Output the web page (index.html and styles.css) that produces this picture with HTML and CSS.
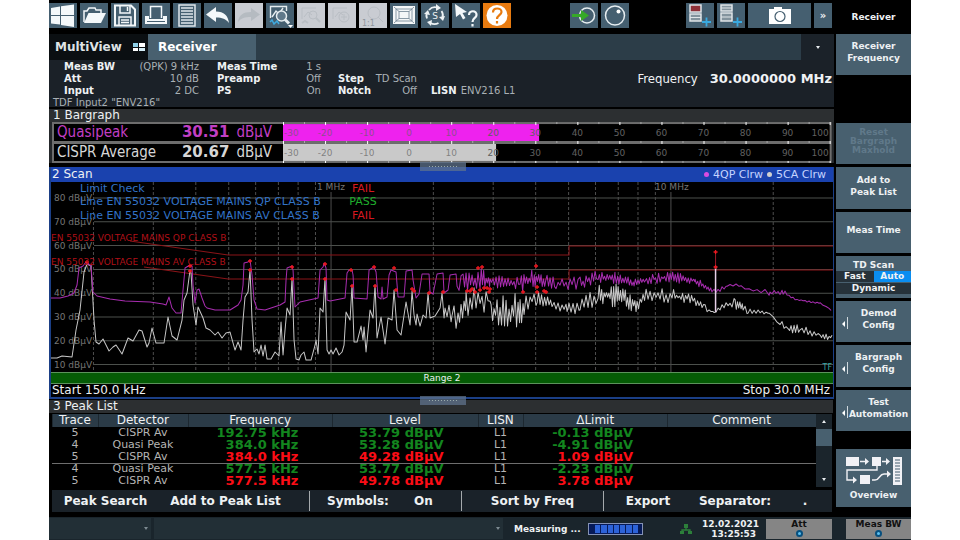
FILE: index.html
```html
<!DOCTYPE html>
<html lang="en">
<head>
<meta charset="utf-8">
<title>Receiver</title>
<link rel="stylesheet" href="styles.css">
</head>
<body>
<div class="screen">
  <div class="main">
    <div class="work">
      <div class="toolbar">
        <button class="tool" aria-label="Windows"><svg viewBox="0 0 28 25"><path fill="#f4f8fa" d="M2 5l9-1.500v8.500H2zM12 3.300L25 1.500V12H12zM2 13h9v8.500L2 20.500zM12 13h13v11l-13-2z"/></svg></button>
        <button class="tool" aria-label="Open"><svg viewBox="0 0 28 25"><path fill="none" stroke="#f4f8fa" stroke-width="1.500" d="M4 19V8h3l2-3h6l1 2h5v3"/><path fill="#f4f8fa" d="M8.500 10H26l-5 10H4z"/></svg></button>
        <button class="tool" aria-label="Save"><svg viewBox="0 0 28 25"><path fill="none" stroke="#f4f8fa" stroke-width="2" d="M4 2.500h16l4 4V22.500H4z"/><path fill="none" stroke="#f4f8fa" stroke-width="1.500" d="M9 3v7h10V3M8 22v-8h12v8M16.500 4v4M10 17h8M10 19.500h8"/></svg></button>
        <button class="tool" aria-label="Print"><svg viewBox="0 0 28 25"><path fill="none" stroke="#f4f8fa" stroke-width="1.500" d="M8.500 15V3.500h11V15"/><path fill="#f4f8fa" d="M3 13h4v3h14v-3h4v8H3z"/><path stroke="#455f70" d="M5 18.500h18"/></svg></button>
        <button class="tool" aria-label="Report"><svg viewBox="0 0 28 25"><path fill="none" stroke="#dfe7eb" stroke-width="1.500" d="M6 2h16v21H6zM8 5h12M8 8h12M8 11h12M8 14h12M8 17h12M8 20h12"/></svg></button>
        <button class="tool" aria-label="Undo"><svg viewBox="0 0 28 25"><path fill="#f4f8fa" d="M2 11.500L12 4v4.500c8 0 12 4 13 11.500-3-4-7-5.500-13-5.500V19z"/></svg></button>
        <button class="tool off" disabled aria-label="Redo"><svg viewBox="0 0 28 25"><path fill="#b5bbc1" d="M25 11.500L16 5v4C8 9 4 12 3 19c3-4 7-5 13-5v4z"/></svg></button>
        <button class="tool" aria-label="Zoom trace"><svg viewBox="0 0 28 25"><path fill="none" stroke="#e6edf0" stroke-width="1.400" d="M4.500 15V3.500h16V8M6 14l4-6 3 3 4-6"/><circle cx="15.500" cy="13" r="5" fill="#60798a" stroke="#e6edf0" stroke-width="1.500"/><path stroke="#e6edf0" stroke-width="3" d="M19 16.500l4 4"/><path fill="none" stroke="#3fa9df" stroke-width="1.500" d="M4 19l2-2 2 4 3-3 2 3"/><path fill="#fff" d="M22 22h5l-2.500 3z"/></svg></button>
        <button class="tool off" disabled aria-label="Zoom off"><svg viewBox="0 0 28 25" fill="none" stroke="#b9bec4"><path d="M5 16V5h14M7 14l4-5 4 3"/><circle cx="16" cy="12" r="4"/><path stroke-width="2" d="M19 15l4 4M5 20l3-2 3 2"/></svg></button>
        <button class="tool off" disabled aria-label="Multi zoom"><svg viewBox="0 0 28 25" fill="none" stroke="#b9bec4"><path d="M5 16V5h14M7 14l4-5 4 3M13 14h6M16 11v6"/><circle cx="16" cy="14" r="5"/></svg></button>
        <button class="tool off" disabled aria-label="Zoom 1:1"><svg viewBox="0 0 28 25" fill="none" stroke="#b9bec4"><circle cx="15" cy="10" r="6"/><path d="M19 14l5 5"/><text x="3" y="23" fill="#8f969d" stroke="none" font-size="8">1:1</text></svg></button>
        <button class="tool" aria-label="Fit display"><svg viewBox="0 0 28 25"><path fill="#f4f7f8" d="M3 3h22v18H3z"/><path fill="none" stroke="#6d8290" stroke-width="0.800" d="M6 6h16v12H6zM9 8.500h10v7H9zM4 4l5 4.500M24 4l-5 4.500M4 20l5-4.500M24 20l-5-4.500"/></svg></button>
        <button class="tool" aria-label="Sequencer"><svg viewBox="0 0 28 25"><path fill="none" stroke="#edf2f4" stroke-width="1.800" d="M8 7a8 8 0 0 1 8-2.500M20.500 8a8 8 0 0 1 1 7M17.500 20a8 8 0 0 1-8 0M6 15.500a8 8 0 0 1 0-6"/><path fill="#edf2f4" d="M15 1l5 4-5 3zM24 13l-2 5-4-4zM11 17l-1 6-4-4zM3 11l4-4 2 5z"/><text x="14" y="16" text-anchor="middle" font-size="9" fill="#edf2f4">S</text></svg></button>
        <button class="tool" aria-label="Context help"><svg viewBox="0 0 28 25"><path fill="#f4f8fa" d="M3 1l12 8-4.500 1 3 5-2.500 1.500-3-5.500L4 14z"/><path fill="none" stroke="#f4f8fa" stroke-width="2.200" d="M17 12c0-5 8-5 7.500 0 0 3-4 3-4 7M20.500 21v2.500"/></svg></button>
        <button class="tool help" aria-label="Help"><svg viewBox="0 0 28 25"><circle cx="14" cy="12.500" r="10.500" fill="#fff"/><path fill="none" stroke="#e87b10" stroke-width="2.200" d="M10 9.500c0-5.500 8.500-5 8.500-.5 0 3-4.500 3.500-4.500 7M14 18v2.500"/></svg></button>
        <span class="space-a"></span>
        <button class="tool" aria-label="Single run"><svg viewBox="0 0 28 25"><circle cx="17" cy="12.500" r="7.500" fill="none" stroke="#e6edf0" stroke-width="1.500"/><path fill="#36a928" d="M2 11h9V7l8 5.500-8 5.500v-4H2z"/></svg></button>
        <button class="tool" aria-label="Continuous run"><svg viewBox="0 0 28 25"><circle cx="14" cy="12.500" r="9.500" fill="none" stroke="#e6edf0" stroke-width="1.500"/><circle cx="17.500" cy="8.500" r="2" fill="#fff"/></svg></button>
        <span class="space-b"></span>
        <button class="tool" aria-label="Add limit line"><svg viewBox="0 0 28 25"><path fill="#8e3038" stroke="#dfe5e8" stroke-width="1.500" d="M4 2h11v7H4z"/><path fill="#83939d" stroke="#dfe5e8" stroke-width="1.500" d="M4 11h11v7H4z"/><path stroke="#dfe5e8" d="M4 14.500h11"/><path stroke="#39a9e0" stroke-width="1.800" d="M16 19h9M20.500 14.500v9"/></svg></button>
        <button class="tool" aria-label="Add window"><svg viewBox="0 0 28 25"><path fill="#83939d" stroke="#dfe5e8" stroke-width="1.500" d="M4 2h11v6H4zM4 10h11v8H4z"/><path stroke="#dfe5e8" d="M4 5h11M4 14h11"/><path stroke="#39a9e0" stroke-width="1.800" d="M16 19h9M20.500 14.500v9"/></svg></button>
        <button class="tool camera" aria-label="Screenshot"><svg viewBox="0 0 28 25"><path fill="#fff" d="M3 6h5V4h8v2h9v15H3z"/><circle cx="14" cy="13.500" r="5" fill="#fff" stroke="#455f70" stroke-width="1.200"/></svg></button>
        <button class="tool more">»</button>
      </div>

      <div class="tabs">
        <button class="tab">MultiView <svg class="quad" viewBox="0 0 12 8"><path fill="#8ed0e8" d="M0 0h5v4H0z"/><path fill="#fff" d="M6 0h6v4H6zM0 5h5v3H0z"/><path fill="#d5eef7" d="M6 5h6v3H6z"/></svg></button>
        <button class="tab current">Receiver</button>
        <span class="tab-fill"></span>
        <button class="tab-menu" aria-label="Tab menu"><i class="caret"></i></button>
      </div>

      <div class="info">
        <dl class="params p1"><dt>Meas BW</dt><dd>(QPK) 9 kHz</dd><dt>Att</dt><dd>10 dB</dd><dt>Input</dt><dd>2 DC</dd></dl>
        <dl class="params p2"><dt>Meas Time</dt><dd>1 s</dd><dt>Preamp</dt><dd>Off</dd><dt>PS</dt><dd>On</dd></dl>
        <dl class="params p3"><dt>Step</dt><dd>TD Scan</dd><dt>Notch</dt><dd>Off</dd></dl>
        <dl class="params p4"><dt>LISN</dt><dd>ENV216 L1</dd></dl>
        <div class="freq"><span>Frequency</span> <b>30.0000000 MHz</b></div>
        <div class="tdf">TDF Input2 "ENV216"</div>
      </div>

      <section class="bargraph">
        <h2 class="bar-title">1 Bargraph</h2>
        <div class="meters">
          <div class="readings">
            <div class="reading qp"><span>Quasipeak</span><b>30.51</b><span>dBµV</span></div>
            <div class="reading"><span>CISPR Average</span><b>20.67</b><span>dBµV</span></div>
          </div>
          <svg class="scale" id="scale" viewBox="0 0 550 41"></svg>
        </div>
        <i class="grip"></i>
      </section>

      <section class="scan">
        <div class="scan-head"><h2>2 Scan</h2><span class="legend"><i class="dot m"></i>4QP Clrw <i class="dot"></i>5CA Clrw</span></div>
        <svg class="plot" id="plot" viewBox="51 182 782 190"></svg>
        <div class="range">Range 2</div>
        <div class="span-row"><span>Start 150.0 kHz</span><span>Stop 30.0 MHz</span></div>
        <i class="grip"></i>
      </section>

      <section class="peaks">
        <h2 class="peak-title">3 Peak List</h2>
        <div class="table-wrap">
          <table>
            <colgroup><col class="c1"><col class="c2"><col class="c3"><col class="c4"><col class="c5"><col class="c6"><col class="c7"></colgroup>
            <thead><tr><th>Trace</th><th>Detector</th><th>Frequency</th><th>Level</th><th>LISN</th><th>ΔLimit</th><th>Comment</th></tr></thead>
            <tbody>
              <tr class="ok"><td>5</td><td>CISPR Av</td><td class="v">192.75 kHz</td><td class="v">53.79 dBµV</td><td>L1</td><td class="v">-0.13 dBµV</td><td></td></tr>
              <tr class="ok"><td>4</td><td>Quasi Peak</td><td class="v">384.0 kHz</td><td class="v">53.28 dBµV</td><td>L1</td><td class="v">-4.91 dBµV</td><td></td></tr>
              <tr class="bad line"><td>5</td><td>CISPR Av</td><td class="v">384.0 kHz</td><td class="v">49.28 dBµV</td><td>L1</td><td class="v">1.09 dBµV</td><td></td></tr>
              <tr class="ok"><td>4</td><td>Quasi Peak</td><td class="v">577.5 kHz</td><td class="v">53.77 dBµV</td><td>L1</td><td class="v">-2.23 dBµV</td><td></td></tr>
              <tr class="bad"><td>5</td><td>CISPR Av</td><td class="v">577.5 kHz</td><td class="v">49.78 dBµV</td><td>L1</td><td class="v">3.78 dBµV</td><td></td></tr>
            </tbody>
          </table>
          <div class="scroll"><button aria-label="Scroll up"><i class="caret up"></i></button><i class="thumb"></i><button aria-label="Scroll down"><i class="caret"></i></button></div>
        </div>
        <div class="actions">
          <button class="a1">Peak Search</button><button class="a2">Add to Peak List</button>
          <button class="a3">Symbols:</button><button class="a4">On</button>
          <button class="a5">Sort by Freq</button>
          <button class="a6">Export</button><button class="a7">Separator:</button><button class="a8">.</button>
        </div>
      </section>
    </div>

    <aside class="side">
      <h1>Receiver</h1>
      <div class="keys">
        <button class="key">Receiver<br>Frequency</button>
        <span></span>
        <button class="key dim" disabled>Reset<br>Bargraph<br>Maxhold</button>
        <button class="key">Add to<br>Peak List</button>
        <button class="key mid">Meas Time</button>
        <button class="key toggle"><span>TD Scan</span><span class="pair"><span>Fast</span><span class="on">Auto</span></span><span class="dyn">Dynamic</span></button>
        <button class="key sub">Demod<br>Config</button>
        <button class="key sub">Bargraph<br>Config</button>
        <button class="key sub">Test<br>Automation</button>
      </div>
      <button class="key overview"><svg viewBox="0 0 58 30"><path fill="#f1f1f5" d="M1 1h13v9H1zM27 1h9v9h-9zM15 19h10v9H15zM48 1h9v28h-9z"/><path stroke="#455f70" d="M50 4h5M50 7h5M50 10h5M50 13h5M50 16h5M50 19h5M50 22h5M50 25h5"/><path fill="none" stroke="#f1f1f5" stroke-width="1.400" d="M15 5.500h6M37 5.500h5M32 10v4H2v10h6M27 24h3c5 0 4-6 9-6h4"/><path fill="#f1f1f5" d="M20 2l4 3.500L20 9zM41 2l4 3.500L41 9zM8 20.500l4 3.500-4 3.500zM42 14.500l4 3.500-4 3.500z"/></svg>Overview</button>
    </aside>
  </div>

  <footer class="status">
    <div class="msg m1"><i class="caret"></i></div>
    <div class="msg m2"><i class="caret"></i></div>
    <span class="measuring">Measuring ...</span>
    <span class="progress"><i></i><i></i><i></i><i></i><i></i><i></i><i></i></span>
    <svg class="net" viewBox="0 0 14 12"><path fill="none" stroke="#2c7f3a" stroke-width="1.300" d="M7 4v3M3 9V7h8v2"/><path fill="#2c7f3a" d="M5 1h4v4H5zM1 8h4v3H1zM9 8h4v3H9z"/></svg>
    <time>12.02.2021<br>13:25:53</time>
    <button class="knob k1">Att<i></i></button>
    <button class="knob k2">Meas BW<i></i></button>
  </footer>
</div>
<script src="chart.js"></script>
</body>
</html>
```
FILE: styles.css
```css
* { box-sizing: border-box; }
body { margin: 0; background: #fff; font-family: "DejaVu Sans", Verdana, sans-serif; }
button { border: 0; padding: 0; margin: 0; font: inherit; color: inherit; background: none; }
h1, h2, dl, dd { margin: 0; font: inherit; }
svg { display: block; }

.screen { margin: 0 5.100vw; background: #000; color: #eef1f3; min-height: 100vh; display: flex; flex-direction: column; }
.main { display: flex; flex: 1; gap: 2px; }
.work { flex: 1; min-width: 0; }

.toolbar { display: flex; gap: 3px; padding: 3px 2px 0 0; height: 34px; }
.tool { width: 28px; height: 25px; background: #455f70; flex: none; }
.tool svg { width: 28px; height: 25px; }
.tool.off { background: #c9ccd2; }
.tool.help { background: #e87b10; }
.tool.camera { width: 63px; }
.tool.camera svg { margin: 0 auto; }
.tool.more { width: 18px; font-size: 10px; font-weight: bold; }
.space-a { flex: 56; }
.space-b { flex: 54; }

.tabs { display: flex; height: 26px; font-size: 12px; font-weight: bold; }
.tab { display: flex; align-items: center; gap: 11px; width: 99px; padding-left: 6px; color: #dfe3e5; background: #0b0f12; }
.tab.current { width: 108px; padding-left: 10px; background: #48606f; color: #fff; }
.quad { width: 12px; height: 8px; }
.tab-fill { flex: 1; background: #2c3d48; }
.tab-menu { width: 33px; background: #1b2229; display: grid; place-items: center; }
.caret { display: block; width: 0; height: 0; border: 2px solid transparent; border-top: 3px solid #e8ecee; border-bottom: 0; }
.caret.up { border-top: 0; border-bottom: 3px solid #e8ecee; }

.info { display: grid; grid-template-columns: 15px 135px 18px 104px 17px 79px 14px 1fr auto; grid-template-rows: 37px 10px; height: 47px; background: #1b2128; font-size: 10px; line-height: 12px; color: #a9b0b5; }
.params { display: grid; grid-template-columns: auto 1fr; align-content: start; row-gap: 0; align-self: end; }
.params dt { font-weight: bold; color: #eef1f3; }
.params dd { text-align: right; white-space: nowrap; }
.p1 { grid-column: 2; } .p2 { grid-column: 4; } .p3 { grid-column: 6; } .p4 { grid-column: 8; }
.p4 dd { text-align: left; padding-left: 4px; }
.freq { grid-column: 9; align-self: center; display: flex; align-items: baseline; gap: 12px; padding-right: 2px; color: #f0f3f5; font: 13px "DejaVu Sans Condensed", "DejaVu Sans", sans-serif; }
.freq b { font-family: "DejaVu Sans", sans-serif; }
.tdf { grid-column: 1 / -1; padding-left: 4px; }

.bargraph { margin-top: 2px; background: #25282b; position: relative; }
.bar-title, .peak-title { padding-left: 4px; height: 13px; font-size: 12px; line-height: 13px; background: #2c2f31; }
.meters { display: flex; margin: 0 2px 0 3px; }
.readings { flex: 230; min-width: 0; background: #6d6d6d; padding: 2px 0 2px 2px; display: grid; grid-template-rows: 1fr 1fr; gap: 3px; }
.reading { display: grid; grid-template-columns: 1fr auto 45px; align-items: center; padding: 0 9px 0 3px; background: #000; color: #d6d6d6; font: 15px/17px "DejaVu Sans Condensed", "DejaVu Sans", sans-serif; white-space: nowrap; }
.reading b { font-family: "DejaVu Sans", sans-serif; }
.reading span:last-child { padding-left: 7px; }
.reading.qp { color: #c23fc4; }
.scale { flex: 550; min-width: 0; }
.scale text, .plot text { font-family: "DejaVu Sans", sans-serif; }
.scale text { font-size: 9px; fill: #606060; }
.grip { position: absolute; z-index: 2; left: 47.200%; width: 46px; height: 9px; bottom: -8px; background: repeating-linear-gradient(90deg, #9aa 0 1px, transparent 1px 3px) 50% 4px / 28px 1px no-repeat, rgba(95, 115, 140, 0.750); }

.scan { margin-top: 4px; border: solid #1b3f86; border-width: 0 1px 2px 2px; position: relative; }
.scan-head { display: flex; justify-content: space-between; height: 15px; padding: 0 7px 0 1px; background: #1a42ae; font-size: 12px; line-height: 15px; }
.legend { display: flex; align-items: center; gap: 4px; font-size: 11px; color: #c5d4ff; }
.dot { width: 5px; height: 5px; border-radius: 50%; background: #d0d0d0; }
.dot.m { background: #d94be0; }
.plot { width: 100%; height: auto; }
.range { height: 12px; border: 1px solid #5c925c; border-width: 1px 0; background: #055b05; font-size: 9px; line-height: 10px; text-align: center; }
.span-row { display: flex; justify-content: space-between; padding: 0 3px 0 1px; font-size: 12px; line-height: 13px; height: 13px; }

.peaks { margin-top: 1px; }
.peak-title { margin: 0 1px 1px 0; }
.table-wrap { display: flex; margin: 0 2px 0 3px; height: 73px; }
table { flex: 1; border-collapse: collapse; table-layout: fixed; width: 100%; }
.c1 { width: 6%; } .c2 { width: 11.800%; } .c3 { width: 18.900%; } .c4 { width: 19%; } .c5 { width: 6%; } .c6 { width: 18.800%; }
th { padding: 0; font-size: 12px; font-weight: normal; line-height: 13px; background: linear-gradient(90deg, #1d2830 0 1px, #2b3b47 1px); }
td { padding: 0; text-align: center; font-size: 11px; line-height: 12px; height: 12px; color: #b4b4b4; white-space: nowrap; }
td.v { text-align: right; padding-right: 34px; font-size: 13px; font-weight: bold; }
.ok td.v { color: #13861f; }
.bad td.v { color: #fb0d16; }
.line td { box-shadow: 0 1px #6e6e6e; }
.scroll { width: 16px; background: #1b252c; display: flex; flex-direction: column; }
.scroll button { height: 15px; display: grid; place-items: center; }
.scroll button:last-child { margin-top: auto; }
.thumb { height: 17px; background: #48606f; }
.actions { display: grid; grid-template-columns: 107fr 150fr 97fr 55fr 142fr 89fr 86fr 54fr; align-items: center; height: 22px; margin: 3px 2px 5px 3px; background: #1a2229; font-size: 12px; font-weight: bold; }
.actions button { height: 20px; white-space: nowrap; }
.a3, .a5, .a6 { border-left: 1px solid #a5aaad; }
.a2 { padding-right: 17px; }
.a4 { padding-right: 20px; }

.side { width: 75px; display: flex; flex-direction: column; font-size: 9px; font-weight: bold; text-align: center; line-height: 12px; }
.side h1 { height: 34px; padding-top: 11px; }
.keys { flex: 1; display: grid; grid-template-rows: repeat(9, 1fr); gap: 3px; max-height: 397px; }
.key { background: #48606f; position: relative; display: block; }
.key:first-child, .key:nth-child(4), .key:nth-child(n+7) { padding-bottom: 5px; }
.key.mid { padding-bottom: 4px; }
.key.dim { color: #60798a; line-height: 9px; padding-bottom: 5px; }
.key.toggle { display: flex; flex-direction: column; justify-content: space-between; line-height: 11px; padding-top: 4px; }
.pair { display: grid; grid-template-columns: 1fr 1fr; background: #26323a; }
.on { background: #0a8df0; }
.dyn { background: #26323a; margin-bottom: 4px; }
.key.sub { padding-left: 10px; }
.key.sub::before { content: ""; position: absolute; left: 6px; top: 50%; border: 3px solid transparent; border-right-color: #fff; border-left: 0; }
.key.sub::after { content: ""; position: absolute; left: 11px; top: 40%; height: 12px; width: 1px; background: #cfd8dd; }
.key.overview { height: 58px; margin: 18px 0 8px; display: flex; flex-direction: column; align-items: center; justify-content: flex-end; gap: 3px; padding-bottom: 6px; }
.overview svg { width: 58px; height: 30px; }

.status { display: flex; align-items: center; height: 23px; background: #1a252c; font-size: 9px; font-weight: bold; line-height: 10px; }
.msg { height: 21px; background: #222f36; display: flex; justify-content: flex-end; align-items: center; padding-right: 3px; margin-right: 3px; }
.msg .caret { border-top-color: #7d8a91; }
.m1 { width: 102px; }
.m2 { flex: 1; margin-right: 11px; }
.measuring { width: 74px; white-space: nowrap; }
.progress { display: flex; gap: 1px; width: 55px; height: 12px; border: 1px solid #8492b5; background: #061a58; padding: 1px 4px 1px 6px; }
.progress i { flex: 1; background: #2d63d8; }
.net { width: 14px; height: 12px; margin: 0 9px 0 36px; }
time { width: 54px; display: flow-root; text-align: right; white-space: nowrap; }
.knob { width: 66px; height: 20px; margin-left: 10px; background: #858585; color: #111; line-height: 10px; display: flex; flex-direction: column; align-items: center; }
.knob i { width: 7px; height: 7px; border: 2px solid #07507f; border-radius: 50%; background: #5cc0f0; margin-top: 1px; }
.k2 { margin-left: 14px; width: 65px; }
```
FILE: chart.js
```js
var NS = "http://www.w3.org/2000/svg";

function add(parent, name, attrs, text) {
  var el = document.createElementNS(NS, name);
  for (var k in attrs) el.setAttribute(k, attrs[k]);
  if (text) el.textContent = text;
  parent.appendChild(el);
  return el;
}

// Repeatable noise so the traces look the same on each load.
var seed = 7;
function rnd() {
  seed = (seed * 16807) % 2147483647;
  return seed / 2147483647;
}

// ---- bargraph scale: -30 to 100 dBµV ----
var scale = document.getElementById("scale");
add(scale, "rect", { width: 550, height: 41, fill: "#6d6d6d" });
function px(v) { return (v + 30) * 548 / 130; }
[[2, 30.9, "#ee22ee"], [22, 20.67, "#c9c9c9"]].forEach(function (b) {
  add(scale, "rect", { x: 0, y: b[0], width: 548, height: 17, fill: "#000" });
  add(scale, "rect", { x: 0, y: b[0], width: px(b[1]), height: 17, fill: b[2] });
});
for (var v = -30; v <= 100; v += 5) {
  [0, 19, 39].forEach(function (y) {
    add(scale, "rect", { x: px(v), y: y, width: 1, height: v % 10 ? 2 : 3, fill: v % 10 ? "#aaa" : "#fff" });
  });
  if (v % 10 === 0) {
    [14, 34].forEach(function (y) {
      var first = v === -30, last = v === 100;
      add(scale, "text", {
        x: first ? 1 : last ? 547 : px(v), y: y,
        "text-anchor": first ? "start" : last ? "end" : "middle",
        "fill-opacity": v < 20 ? 0.7 : 1
      }, String(v));
    });
  }
}

// ---- scan plot ----
var plot = document.getElementById("plot");
function fx(khz) { return 51 + 782 * Math.log(khz / 150) / Math.log(200); }
function dy(db) { return 198 + (80 - db) * 2.38; }

for (var db = 80; db >= 10; db -= 10) {
  add(plot, "line", { x1: 94, x2: 833, y1: dy(db), y2: dy(db), stroke: "#4c504c", "stroke-width": 1 });
}
[100, 1000, 10000].forEach(function (dec) {
  for (var n = 1; n < 10; n++) {
    var f = dec * n;
    if (f < 200 || f >= 30000) continue;
    add(plot, "line", {
      x1: fx(f), x2: fx(f), y1: n === 1 ? 192 : 182, y2: 372, stroke: "#4d4d4d",
      "stroke-dasharray": n === 1 ? "none" : "3 2"
    });
  }
});
for (db = 80; db >= 10; db -= 10) {
  add(plot, "text", { x: 54, y: dy(db) + 3, "font-size": 9, fill: "#767676" }, db + " dBµV");
}
add(plot, "text", { x: 317, y: 190, "font-size": 9, fill: "#767676" }, "1 MHz");
add(plot, "text", { x: 655, y: 190, "font-size": 9, fill: "#767676" }, "10 MHz");

add(plot, "polyline", { points: "130,241 228,255 569,255 569,246 833,246", fill: "none", stroke: "#8a1418" });
add(plot, "polyline", { points: "144,267 228,279 569,279 569,270 833,270", fill: "none", stroke: "#8a1418" });

function trace(shape, noise, color) {
  var pts = shape.slice();
  for (var i = 0; i < noise.length - 1; i++) {
    var a = noise[i], b = noise[i + 1];
    for (var x = a[0]; x < b[0]; x += a[3]) {
      var t = (x - a[0]) / (b[0] - a[0]);
      var top = a[1] + (b[1] - a[1]) * t, bot = a[2] + (b[2] - a[2]) * t;
      var up = Math.round(x / a[3]) % 2;
      var r = up ? rnd() * 0.45 : 1 - rnd() * 0.45;
      pts.push([x.toFixed(1), (top + (bot - top) * r).toFixed(1)]);
    }
  }
  add(plot, "polyline", { points: pts.join(" "), fill: "none", stroke: color, "stroke-width": 1, "stroke-linejoin": "round" });
}

trace([[51,358],[57,358],[62,356],[72,357],[76,330],[80,310],[84,272],[87,264],[91,266],[94,320],[96,342],[99,344],[103,339],[109,351],[113,347],[116,345],[122,354],[128,338],[133,341],[139,330],[142,331],[147,347],[149,343],[152,328],[156,343],[164,343],[168,317],[172,336],[177,340],[182,320],[184,300],[187,293],[190,270],[191,273],[193,305],[196,325],[198,307],[203,318],[206,328],[210,330],[215,335],[218,332],[222,338],[226,333],[230,332],[235,350],[238,342],[241,350],[243,320],[245,297],[248,292],[250,270],[252,320],[254,352],[257,349],[259,354],[261,345],[263,356],[265,345],[267,359],[271,359],[275,352],[279,356],[281,322],[283,355],[285,330],[287,308],[290,315],[292,278],[294,340],[296,359],[299,360],[301,355],[304,352],[306,360],[311,360],[315,345],[316,340],[318,354],[320,308],[323,312],[325,278],[327,350],[329,354],[331,350],[333,354],[336,348],[339,355],[342,352],[344,345],[346,312],[350,320],[352,285],[354,342],[357,342],[361,326],[363,340],[364,327],[366,352],[370,310],[373,318],[375,285],[377,338],[381,317],[385,344],[388,318],[392,320],[394,290],[397,330],[401,335],[406,302],[410,325],[412,291],[414,315],[416,325],[417,314],[420,326],[423,315],[426,318],[428,293],[430,318],[435,316],[440,308],[442,293],[444,318]],
  [[445,308,325,2],[452,298,324,2],[458,300,338,1.5],[466,288,322,2],[488,285,312,2],[491,294,330,1.5],[520,292,332,1.5],[524,293,315,2],[537,289,306,1.5],[552,298,312,2],[567,302,316,2],[580,300,316,2],[598,284,304,1.2],[618,284,308,1.2],[637,294,312,1.5],[646,288,300,2],[672,289,304,1.5],[690,292,304,1.5],[705,304,312,2],[714,311,315,2],[726,301,308,2],[735,297,310,1.2],[743,300,312,2],[748,307,314,2],[769,312,314,4],[780,320,328,2],[788,326,334,1.5],[800,324,332,2],[820,333,340,1.5],[833,335,340,2]], "#c8c8c8");

trace([[51,298],[60,298],[68,296],[74,293],[77,285],[79,268],[83,266],[86,262],[91,266],[93,292],[97,296],[110,299],[125,301],[150,302],[163,304],[166,305],[169,297],[172,308],[176,313],[181,313],[183,290],[185,268],[190,265],[192,266],[193,285],[195,303],[197,290],[199,289],[202,298],[205,306],[207,308],[215,310],[230,310],[238,305],[241,300],[243,285],[244,263],[248,262],[250,260],[252,275],[254,300],[257,309],[265,310],[280,305],[285,302],[286,280],[287,268],[292,266],[293,270],[294,290],[295,307],[300,302],[318,298],[320,270],[323,267],[324,263],[326,268],[327,300],[330,301],[345,298],[347,273],[349,270],[352,270],[353,275],[354,298],[367,299],[369,270],[374,267],[376,272],[378,297],[381,299],[382,287],[383,299],[387,297],[389,275],[391,270],[396,272],[398,297],[404,297],[406,271],[412,270],[413,280],[416,298],[419,294],[422,274],[429,274],[430,292],[433,294],[437,274],[443,273],[444,293],[448,290],[450,275],[456,274]],
  [[457,280,295,2],[463,272,293,1.5],[480,268,288,1.2],[490,272,290,1.5],[520,273,293,1.3],[535,267,288,1.2],[547,273,292,1.5],[556,277,290,2],[580,277,290,1.5],[598,270,283,1.3],[615,272,284,1.3],[634,279,290,1.3],[645,275,285,1.5],[670,271,282,1.3],[695,276,286,1.3],[712,289,292,2],[718,288,293,2],[727,285,287,3],[739,283,287,2],[745,287,289,4],[770,290,296,2],[783,289,295,2],[795,298,301,2],[820,302,304,3],[829,308,309,2],[833,312,312,2]], "#a82db0");

// the single carrier near 14 MHz
add(plot, "line", { x1: 715.5, x2: 715.5, y1: 251, y2: 270, stroke: "#a01a28", "stroke-width": 1 });
add(plot, "line", { x1: 715.5, x2: 715.5, y1: 266, y2: 312, stroke: "#e6cfe8", "stroke-width": 1.5 });

[[87,262],[190,266],[190,271],[250,261],[250,270],[292,267],[292,279],[325,264],[325,279],[351,270],[352,286],[374,267],[375,286],[394,268],[396,290],[412,289],[414,291],[429,293],[443,292],[467,291],[472,289],[475,292],[478,268],[480,290],[482,267],[484,288],[487,288],[489,292],[490,289],[470,291],[523,292],[536,266],[537,287],[537,292],[544,291],[546,292],[715.5,252],[715.5,267]].forEach(function (p) {
  add(plot, "path", { d: "M" + (p[0] - 2) + " " + p[1] + "h4M" + p[0] + " " + (p[1] - 2) + "v4", stroke: "#f01820", "stroke-width": 1.3 });
});

add(plot, "text", { x: 51, y: 241, "font-size": 9, fill: "#b01018" }, "EN 55032 VOLTAGE MAINS QP CLASS B");
add(plot, "text", { x: 51, y: 265, "font-size": 9, fill: "#b01018" }, "EN 55032 VOLTAGE MAINS AV CLASS B");
[["Limit Check", 192, "FAIL", "#d81820"], ["Line EN 55032 VOLTAGE MAINS QP CLASS B", 205, "PASS", "#1fae2c"], ["Line EN 55032 VOLTAGE MAINS AV CLASS B", 219, "FAIL", "#d81820"]].forEach(function (r) {
  add(plot, "text", { x: 80, y: r[1], "font-size": 11, fill: "#3273c8" }, r[0]);
  add(plot, "text", { x: 363, y: r[1], "font-size": 11, "text-anchor": "middle", fill: r[3] }, r[2]);
});
add(plot, "text", { x: 832, y: 370, "font-size": 8, "text-anchor": "end", fill: "#3aa6a6" }, "TF");
```
